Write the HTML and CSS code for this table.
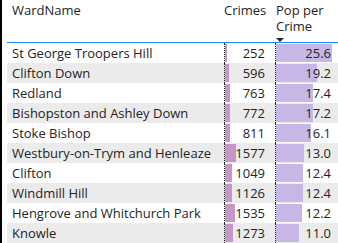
FILE: index.html
```html
<!DOCTYPE html>
<html>
<head>
<meta charset="utf-8">
<link rel="stylesheet" href="styles.css">
</head>
<body>
<div class="frame">
  <div class="table">
    <div class="head">
      <div class="hcell name">WardName</div>
      <div class="hcell num">Crimes</div>
      <div class="hcell pop">Pop per<br>Crime<span class="sort"></span></div>
    </div>
    <div class="row"><div class="cell name">St George Troopers Hill</div><div class="cell crimes"><span class="bar cbar" style="width:1.8px"></span><span class="val">252</span></div><div class="cell ppc"><span class="bar pbar" style="width:56px"></span><span class="val">25.6</span></div></div>
    <div class="row alt"><div class="cell name">Clifton Down</div><div class="cell crimes"><span class="bar cbar" style="width:4px"></span><span class="val">596</span></div><div class="cell ppc"><span class="bar pbar" style="width:41px"></span><span class="val">19.2</span></div></div>
    <div class="row"><div class="cell name">Redland</div><div class="cell crimes"><span class="bar cbar" style="width:5px"></span><span class="val">763</span></div><div class="cell ppc"><span class="bar pbar" style="width:37px"></span><span class="val">17.4</span></div></div>
    <div class="row alt"><div class="cell name">Bishopston and Ashley Down</div><div class="cell crimes"><span class="bar cbar" style="width:5px"></span><span class="val">772</span></div><div class="cell ppc"><span class="bar pbar" style="width:37px"></span><span class="val">17.2</span></div></div>
    <div class="row"><div class="cell name">Stoke Bishop</div><div class="cell crimes"><span class="bar cbar" style="width:5px"></span><span class="val">811</span></div><div class="cell ppc"><span class="bar pbar" style="width:35px"></span><span class="val">16.1</span></div></div>
    <div class="row alt"><div class="cell name">Westbury-on-Trym and Henleaze</div><div class="cell crimes"><span class="bar cbar" style="width:11px"></span><span class="val">1577</span></div><div class="cell ppc"><span class="bar pbar" style="width:28px"></span><span class="val">13.0</span></div></div>
    <div class="row"><div class="cell name">Clifton</div><div class="cell crimes"><span class="bar cbar" style="width:7px"></span><span class="val">1049</span></div><div class="cell ppc"><span class="bar pbar" style="width:27px"></span><span class="val">12.4</span></div></div>
    <div class="row alt"><div class="cell name">Windmill Hill</div><div class="cell crimes"><span class="bar cbar" style="width:7px"></span><span class="val">1126</span></div><div class="cell ppc"><span class="bar pbar" style="width:27px"></span><span class="val">12.4</span></div></div>
    <div class="row"><div class="cell name">Hengrove and Whitchurch Park</div><div class="cell crimes"><span class="bar cbar" style="width:10px"></span><span class="val">1535</span></div><div class="cell ppc"><span class="bar pbar" style="width:26px"></span><span class="val">12.2</span></div></div>
    <div class="row alt"><div class="cell name">Knowle</div><div class="cell crimes"><span class="bar cbar" style="width:8px"></span><span class="val">1273</span></div><div class="cell ppc"><span class="bar pbar" style="width:23px"></span><span class="val">11.0</span></div></div>
  </div>
</div>
</body>
</html>
```
FILE: styles.css
```css
html, body {
  margin: 0;
  padding: 0;
  background: #ffffff;
}
body {
  width: 338px;
  height: 243px;
  overflow: hidden;
  font-family: "Open Sans", "Noto Sans", sans-serif;
  font-size: 13px;
  color: #252423;
}
.frame {
  display: flex;
  height: 243px;
  border-left: 2px solid #000000;
  padding-left: 5px;
}
.table {
  flex: 1;
  display: flex;
  flex-direction: column;
}
.head {
  display: grid;
  grid-template-columns: 217px 51px 63px;
  height: 43px;
  border-bottom: 1px solid #118dff;
  box-sizing: content-box;
}
.hcell {
  padding-top: 2px;
  line-height: 16px;
}
.hcell.name {
  padding-left: 5px;
}
.hcell.num {
  text-align: right;
  padding-right: 10px;
}
.hcell.pop {
  padding-left: 1px;
}
.sort {
  display: block;
  width: 0;
  height: 0;
  margin-top: 4px;
  border-left: 4px solid transparent;
  border-right: 4px solid transparent;
  border-top: 4px solid #252423;
}
.row {
  display: grid;
  grid-template-columns: 217px 51px 63px;
  height: 20px;
  line-height: 20px;
  background: #ffffff;
}
.row.alt {
  background: #ebebeb;
}
.cell {
  position: relative;
  white-space: nowrap;
  overflow: hidden;
}
.cell.name {
  padding-left: 5px;
}
.cell.crimes {
  border-left: 1px dotted #222222;
  text-align: right;
  padding-right: 10px;
}
.cell.ppc {
  border-left: 1px dotted #222222;
  text-align: right;
  padding-right: 7px;
}
.bar {
  position: absolute;
  left: 0;
  top: 1px;
  bottom: 1px;
}
.cbar {
  background: #c597c9;
}
.pbar {
  background: #c7b7e6;
}
.val {
  position: relative;
}
```
